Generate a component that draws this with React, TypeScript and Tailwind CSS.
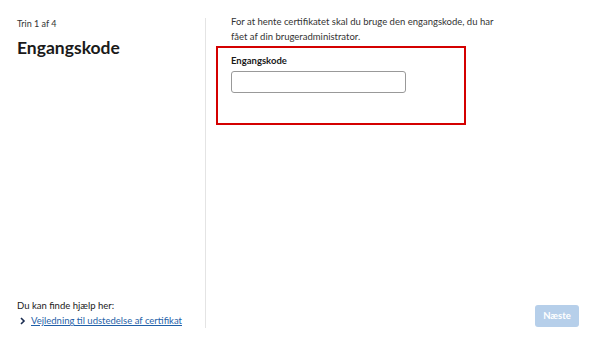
export default function App() {
  return (
    <div className="flex h-[346px] w-[602px] bg-white text-[#1a1a1a] font-['Lato',sans-serif]">
      <aside className="flex w-[205px] shrink-0 flex-col justify-between pl-[17px] pt-[17px] pb-[18px]">
        <div>
          <p className="text-[9px] leading-[14px] text-[#333]">Trin 1 af 4</p>
          <h1 className="mt-[5px] text-[17.5px] font-bold leading-[24px]">Engangskode</h1>
        </div>
        <div className="leading-[14px]">
          <p className="text-[9.5px]">Du kan finde hjælp her:</p>
          <a href="#" className="mt-px flex items-center gap-[5px] pl-[3px] text-[#1f5fa8]">
            <svg width="6" height="8" viewBox="0 0 6 8" fill="none">
              <path d="M1 1l3 3-3 3" stroke="#1a2c50" strokeWidth="1.6" />
            </svg>
            <span className="text-[9.5px] underline">Vejledning til udstedelse af certifikat</span>
          </a>
        </div>
      </aside>
      <div className="my-[18px] w-px bg-[#e4e4e4]" />
      <main className="flex flex-1 flex-col justify-between pb-[19px] pr-[23px] pt-[14px]">
        <div>
          <p className="w-[300px] pl-[25px] text-[9.5px] leading-[15px] text-[#333]">
            For at hente certifikatet skal du bruge den engangskode, du har fået af din brugeradministrator.
          </p>
          <div className="ml-[10px] mt-[2px] h-[79px] w-[250px] border-2 border-[#d40000] pl-[13px] pt-[6px]">
            <label className="block text-[9.5px] font-bold leading-[14px]">Engangskode</label>
            <input className="mt-[3px] block h-[22px] w-[175px] rounded-[3px] border border-[#999] bg-white" />
          </div>
        </div>
        <div className="flex justify-end">
          <button className="h-[22px] w-[44px] rounded-[3px] bg-[#b6cfea] text-[9.5px] font-bold text-white">
            Næste
          </button>
        </div>
      </main>
    </div>
  );
}
